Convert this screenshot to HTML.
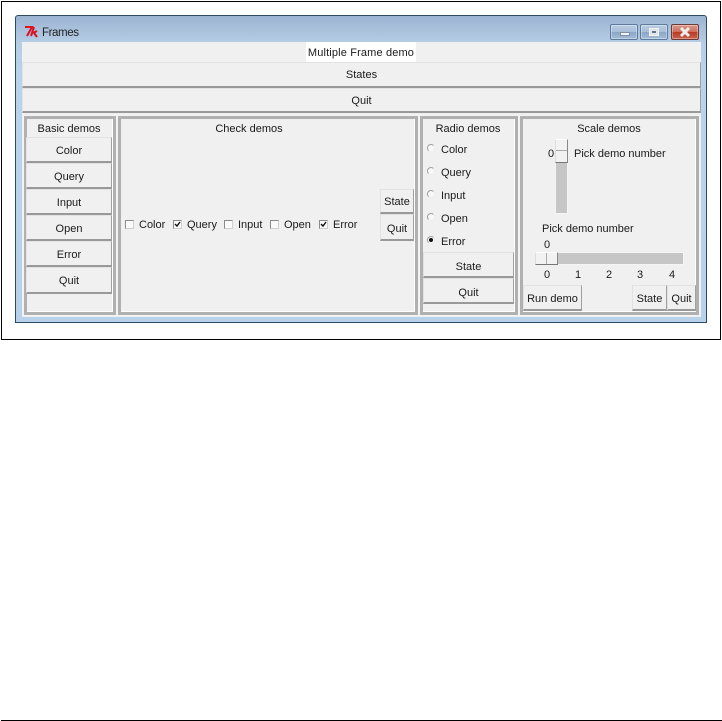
<!DOCTYPE html>
<html><head><meta charset="utf-8"><style>
html,body{margin:0;padding:0;background:#fff}
body{width:722px;height:721px;position:relative;overflow:hidden;font:11px/14px "Liberation Sans",sans-serif;color:#1a1a1a}
div{position:absolute;box-sizing:border-box}
.t{white-space:nowrap;text-align:center;transform:translateX(-50%)}
.l{white-space:nowrap}
.b{background:#f0f0f0;border-style:solid;border-width:1px 1px 2px 1px;border-color:#e2e2e2 #a0a0a0 #999 #e2e2e2;text-align:center;line-height:27px;white-space:nowrap}
.f{background:#f0f0f0;border:3px solid #b0b0b0;box-shadow:inset -1px -1px 0 #fff,0 0 0 1px #f4f4f4}
.c{width:9px;height:9px;background:#fafafa;border:1px solid;border-color:#8a8a8a #d0d0d0 #d0d0d0 #8a8a8a;font-size:0}
.r{width:8px;height:8px;border-radius:50%;background:#f8f8f8;border:1px solid;border-color:#a0a0a0 #eee #eee #a0a0a0}
.wb{top:8px;height:16px;border:1px solid #5d7b9c;border-radius:2px;box-shadow:inset 0 0 0 1px rgba(255,255,255,.35)}
</style></head><body>
<div style="left:1px;top:1px;width:720px;height:339px;border:1px solid #000"></div>
<div style="left:1px;top:720px;width:721px;height:1px;background:#000"></div>

<div style="left:15px;top:15px;width:692px;height:308px;border:1px solid #2f4a5e;border-radius:3px 3px 0 0;background:linear-gradient(#9bb4d1 0,#b6cde6 27px,#bad3ec 60px,#b9d2eb 100%)">
 <div class="wb" style="left:594px;width:28px;background:linear-gradient(#b9cde2 0,#a9c0da 48%,#8ba7c6 52%,#a4bdd8 100%)"><div style="left:9px;top:7px;width:10px;height:4px;background:#f4f4f4;border:1px solid #7d8fa3"></div></div>
 <div class="wb" style="left:624px;width:28px;background:linear-gradient(#b9cde2 0,#a9c0da 48%,#8ba7c6 52%,#a4bdd8 100%)"><div style="left:8px;top:3px;width:10px;height:8px;background:#dfe5eb;border:1px solid #f2f2f2"><div style="left:2px;top:2px;width:4px;height:2px;background:#5f7488"></div></div></div>
 <div class="wb" style="left:655px;width:28px;border-color:#6e3a35;background:linear-gradient(#d89a8c 0,#cf6f5c 48%,#b83a24 52%,#c9644f 100%)">
  <svg width="26" height="14" style="position:absolute;left:0;top:0"><path d="M9 3l8 8M17 3l-8 8" stroke="#eee" stroke-width="3"/></svg></div>
</div>
<svg width="16" height="13" style="position:absolute;left:24px;top:25px"><path d="M1 2H8L3 11" fill="none" stroke="#e0101c" stroke-width="2"/><path d="M7 11L10 2" fill="none" stroke="#d81020" stroke-width="2"/><path d="M9 8L13 6M10 8L13 12" fill="none" stroke="#d81020" stroke-width="2"/></svg>
<div class="l" style="left:42px;top:26px;color:#222;letter-spacing:-.4px;font-size:11.5px">Frames</div>

<div style="left:22px;top:42px;width:679px;height:275px;background:#f0f0f0"></div>
<div class="l" style="left:306px;top:42px;width:110px;height:20px;background:#fff;text-align:center;line-height:22px;letter-spacing:.15px">Multiple Frame demo</div>
<div class="b" style="left:22px;top:62px;width:679px;height:26px;line-height:25px">States</div>
<div class="b" style="left:22px;top:88px;width:679px;height:25px;line-height:25px">Quit</div>

<div class="f" style="left:24px;top:116px;width:92px;height:199px"></div>
<div class="f" style="left:118px;top:116px;width:300px;height:199px"></div>
<div class="f" style="left:420px;top:116px;width:98px;height:199px"></div>
<div class="f" style="left:520px;top:116px;width:179px;height:199px"></div>

<div class="t" style="left:69px;top:122px">Basic demos</div>
<div class="b" style="left:26px;top:137px;width:86px;height:26px">Color</div>
<div class="b" style="left:26px;top:163px;width:86px;height:26px">Query</div>
<div class="b" style="left:26px;top:189px;width:86px;height:26px">Input</div>
<div class="b" style="left:26px;top:215px;width:86px;height:26px">Open</div>
<div class="b" style="left:26px;top:241px;width:86px;height:26px">Error</div>
<div class="b" style="left:26px;top:267px;width:86px;height:27px">Quit</div>

<div class="t" style="left:249px;top:122px">Check demos</div>
<div class="c" style="left:125px;top:220px"></div><div class="l" style="left:139px;top:218px">Color</div>
<div class="c" style="left:173px;top:220px"></div><svg width="9" height="9" style="position:absolute;left:173px;top:220px"><path d="M2 4l2 2 3-4" fill="none" stroke="#111" stroke-width="1.4"/></svg><div class="l" style="left:187px;top:218px">Query</div>
<div class="c" style="left:224px;top:220px"></div><div class="l" style="left:238px;top:218px">Input</div>
<div class="c" style="left:270px;top:220px"></div><div class="l" style="left:284px;top:218px">Open</div>
<div class="c" style="left:319px;top:220px"></div><svg width="9" height="9" style="position:absolute;left:319px;top:220px"><path d="M2 4l2 2 3-4" fill="none" stroke="#111" stroke-width="1.4"/></svg><div class="l" style="left:333px;top:218px">Error</div>
<div class="b" style="left:380px;top:189px;width:34px;height:25px;line-height:25px">State</div>
<div class="b" style="left:380px;top:214px;width:34px;height:27px;line-height:29px">Quit</div>

<div class="t" style="left:468px;top:122px">Radio demos</div>
<div class="r" style="left:427px;top:144px"></div><div class="l" style="left:441px;top:143px">Color</div>
<div class="r" style="left:427px;top:167px"></div><div class="l" style="left:441px;top:166px">Query</div>
<div class="r" style="left:427px;top:190px"></div><div class="l" style="left:441px;top:189px">Input</div>
<div class="r" style="left:427px;top:213px"></div><div class="l" style="left:441px;top:212px">Open</div>
<div class="r" style="left:427px;top:236px"><div style="left:1px;top:1px;width:4px;height:4px;border-radius:50%;background:#111"></div></div><div class="l" style="left:441px;top:235px">Error</div>
<div class="b" style="left:423px;top:252px;width:91px;height:26px;line-height:29px">State</div>
<div class="b" style="left:423px;top:278px;width:91px;height:26px;line-height:29px">Quit</div>

<div class="t" style="left:609px;top:122px">Scale demos</div>
<div class="l" style="left:548px;top:147px">0</div>
<div style="left:555px;top:139px;width:13px;height:75px;background:#c6c6c6;border:1px solid #f4f4f4"></div>
<div style="left:555px;top:139px;width:13px;height:24px;background:#f2f2f2;border:1px solid;border-color:#fff #888 #777 #ddd"><div style="left:0;top:10px;width:11px;height:1px;background:#aaa"></div></div>
<div class="l" style="left:574px;top:147px">Pick demo number</div>
<div class="l" style="left:542px;top:222px">Pick demo number</div>
<div class="l" style="left:544px;top:238px">0</div>
<div style="left:535px;top:252px;width:149px;height:13px;background:#c6c6c6;border:1px solid #f4f4f4"></div>
<div style="left:535px;top:252px;width:23px;height:13px;background:#f2f2f2;border:1px solid;border-color:#fff #888 #777 #ddd"><div style="left:10px;top:0;width:1px;height:11px;background:#aaa"></div></div>
<div class="l" style="left:544px;top:268px">0</div>
<div class="l" style="left:575px;top:268px">1</div>
<div class="l" style="left:606px;top:268px">2</div>
<div class="l" style="left:637px;top:268px">3</div>
<div class="l" style="left:669px;top:268px">4</div>
<div class="b" style="left:523px;top:285px;width:59px;height:26px">Run demo</div>
<div class="b" style="left:632px;top:285px;width:35px;height:26px">State</div>
<div class="b" style="left:667px;top:285px;width:29px;height:26px">Quit</div>
</body></html>
